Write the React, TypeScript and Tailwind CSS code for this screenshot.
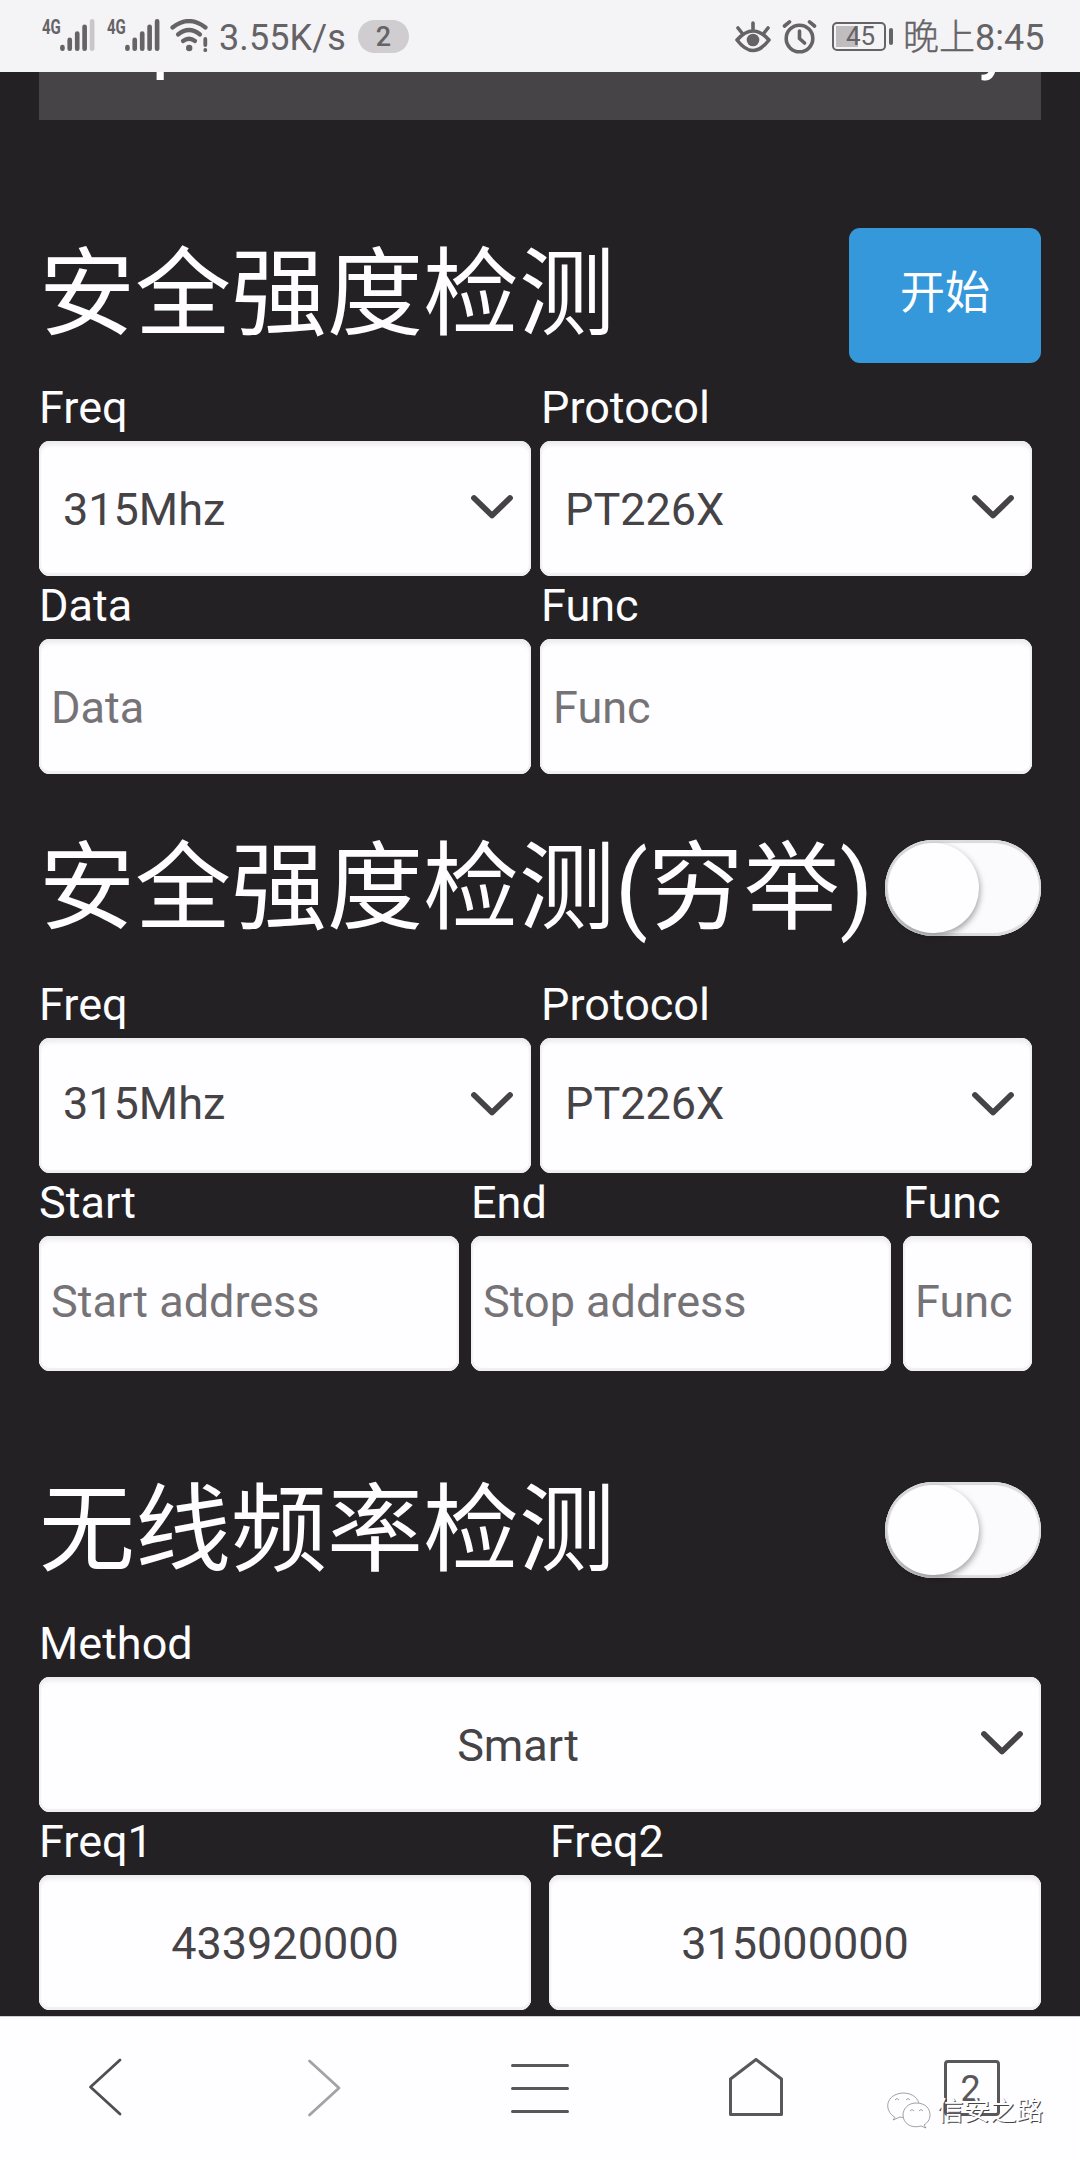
import type { ReactNode } from "react";

function Chevron() {
  return (
    <svg className="-mt-[3px]" width="44" height="28" viewBox="0 0 44 28" fill="none" stroke="#454346" strokeWidth="5.800" strokeLinecap="round" strokeLinejoin="round">
      <path d="M4 5L22 22.500L40 5" />
    </svg>
  );
}

function Field({ label, width, inset, children }: { label: string; width: string; inset?: boolean; children: ReactNode }) {
  return (
    <div className={width}>
      <div className={inset ? "h-[63px] pl-px leading-[60px] whitespace-nowrap text-[#fefdff]" : "h-[63px] leading-[60px] whitespace-nowrap text-[#fefdff]"}>{label}</div>
      <div className="flex h-[135px] items-center rounded-[11px] bg-[#fefdff] shadow-[inset_0_5px_4px_-1px_#ecebee,inset_0_-3px_1px_#f0eff2,inset_2px_0_1px_#f3f2f5,inset_-2px_0_1px_#f3f2f5]">
        {children}
      </div>
    </div>
  );
}

function SelectField({ label, value, raised, inset }: { label: string; value: string; raised?: boolean; inset?: boolean }) {
  return (
    <Field label={label} width="w-[492px]" inset={inset}>
      <span className={inset ? "w-[25px]" : "w-[24px]"} />
      <span className={raised ? "flex-1 pb-[3px] text-[#454346]" : "flex-1 pt-[3px] text-[#454346]"}>{value}</span>
      <span className="mr-[17px]"><Chevron /></span>
    </Field>
  );
}

function InputField({ label, hint, width, raised, inset }: { label: string; hint: string; width: string; raised?: boolean; inset?: boolean }) {
  return (
    <Field label={label} width={width} inset={inset}>
      <span className={inset ? "w-[13px]" : "w-[12px]"} />
      <span className={raised ? "pb-[3px] whitespace-nowrap text-[#757376]" : "pt-[2px] whitespace-nowrap text-[#757376]"}>{hint}</span>
    </Field>
  );
}

function Title({ children }: { children: ReactNode }) {
  return <h1 className="text-[96px] leading-[96px] whitespace-nowrap text-[#fefdff]">{children}</h1>;
}

function Toggle() {
  return (
    <div className="h-[96px] w-[156px] shrink-0 rounded-full bg-[#fbfafc] p-[3px] shadow-[inset_0_0_0_2px_#dcdbde,inset_0_3px_1px_#d6d5d8,inset_0_-3px_1px_#dddcdf]">
      <div className="h-[90px] w-[91px] rounded-full bg-[#fefdff] shadow-[1px_3px_6px_rgba(0,0,0,0.35)]" />
    </div>
  );
}

function Signal({ weak }: { weak?: boolean }) {
  return (
    <div className="flex h-[33px] w-[54px]">
      <span className="h-4 w-[18px] origin-left scale-x-75 text-[20px] leading-[17px] font-bold">4G</span>
      <svg width="37" height="33" viewBox="0 0 37 33" fill="none" stroke="#656366" strokeWidth="4.800" strokeLinecap="round">
        <path d="M2.500 28.500V30M10 21V30M17.700 14.500V30M25.300 7.500V30" />
        <path d="M33 2V30" stroke={weak ? "#c9c7ca" : "#656366"} />
      </svg>
    </div>
  );
}

function StatusBar() {
  return (
    <header className="flex h-[72px] items-start bg-[#f4f3f6] pt-[19px] pl-[42px] text-[#656366]">
      <Signal weak />
      <div className="w-[11px]" />
      <Signal />
      <svg className="ml-[8px]" width="40" height="34" viewBox="0 0 40 34" fill="none" stroke="#656366" strokeWidth="4.200" strokeLinecap="round">
        <path d="M3.500 8.500Q20 -4.500 36.500 8.500" />
        <path d="M9 15.500Q20 6.500 31 15.500" />
        <path d="M14 22Q20 17.500 26 22" />
        <circle cx="20.200" cy="29" r="3.200" fill="#656366" stroke="none" />
        <path d="M36.300 20V26M36.300 31V31.200" strokeWidth="3.800" />
      </svg>
      <span className="ml-[10px] w-[139px] text-[36px] leading-[38px] tracking-[0.1px]">3.55K/s</span>
      <span className="mt-px h-[33px] w-[51px] rounded-full bg-[#cfcdd0] text-center text-[27px] leading-[34px] font-medium">2</span>
      <svg className="ml-[325px]" width="38" height="35" viewBox="0 0 38 35" fill="none" stroke="#656366" strokeWidth="3.600" strokeLinecap="round">
        <path d="M3 21Q19 3 35 21Q19 42 3 21Z" strokeLinejoin="round" />
        <circle cx="19" cy="21" r="6.300" fill="#656366" stroke="none" />
        <path d="M19 4V10M4 9L8 14M34 9L30 14" />
      </svg>
      <svg className="ml-[10px]" width="36" height="36" viewBox="0 0 36 36" fill="none" stroke="#656366" strokeWidth="3.600" strokeLinecap="round">
        <circle cx="17.500" cy="19.500" r="13.300" />
        <path d="M17.500 12V19.500L22.500 24M2.500 7L7.500 2.800M32.500 7L27.500 2.800" />
      </svg>
      <div className="relative mt-[3px] ml-[14px] h-[29px] w-[54px] rounded-[5px] border-2 border-[#656366]">
        <div className="absolute top-[2px] left-[2px] h-[21px] w-[22px] bg-[#bfbdc0]" />
        <div className="relative pl-[3px] text-center text-[26px] leading-[25px]">45</div>
      </div>
      <div className="mt-[9px] ml-[3px] h-[17px] w-[4px] rounded-sm bg-[#656366]" />
      <span className="ml-[10px] text-[36px] leading-[38px] whitespace-nowrap"><span className="font-light [-webkit-text-stroke:0.4px_#656366]">晚上</span>8:45</span>
    </header>
  );
}

function BottomBar() {
  return (
    <nav className="relative grid h-[144px] grid-cols-5 items-center justify-items-center border-t border-[#cfcdd0] bg-[#fefdff] pb-px text-[#59575a]">
      <svg width="60" height="60" viewBox="0 0 60 60" fill="none" stroke="#504e51" strokeWidth="2.800" strokeLinecap="round" strokeLinejoin="round">
        <path d="M42 2L12.500 29L42 56" />
      </svg>
      <svg width="60" height="60" viewBox="0 0 60 60" fill="none" stroke="#a4a2a5" strokeWidth="2.800" strokeLinecap="round" strokeLinejoin="round">
        <path d="M15.500 3L45 30L15.500 57" />
      </svg>
      <svg width="60" height="60" viewBox="0 0 60 60" fill="none" stroke="#59575a" strokeWidth="3" strokeLinecap="round">
        <path d="M2.500 7.500H57.500M2.500 30.500H57.500M2.500 53.500H57.500" />
      </svg>
      <svg width="60" height="60" viewBox="0 0 60 60" fill="none" stroke="#59575a" strokeWidth="3" strokeLinejoin="round">
        <path d="M4.500 21L30 1.500L55.500 21V56.500H4.500Z" />
      </svg>
      <div className="flex size-[56px] items-center justify-center rounded-[4px] border-3 border-[#59575a] pt-[2px] pr-[3px] text-[36px]">2</div>
      <div className="absolute top-[75px] left-[886px] flex">
        <svg width="46" height="38" viewBox="0 0 46 38" fill="#fefdff" stroke="#8a888b" strokeWidth="0.800">
          <path d="M9 25.500C-3 18 0 2 17 1C27 1 33 7 33 13C33 24 21 27 14 25L7 28Z" />
          <path d="M30 11C40 11 44 17 44 23C44 28 41 31 38 33L40 36L35 34C25 37 17 31 17 23C17 17 22 11 30 11Z" />
          <path d="M9 8q2-3 4 0M20 8q2-3 4 0M24 19q2-3 4 0M33 19q2-3 4 0" fill="none" />
        </svg>
        <span className="ml-[5px] pt-[4px] text-[26.500px] leading-[30px] whitespace-nowrap text-[#fefdff] [text-shadow:1px_1px_0_#454346]">信安之路</span>
      </div>
    </nav>
  );
}

export default function App() {
  return (
    <div className="flex h-[2160px] w-[1080px] flex-col overflow-hidden bg-[#232124] font-['Roboto','Noto_Sans_CJK_SC',sans-serif] text-[45px]">
      <StatusBar />
      <main className="flex-1 px-[39px]">
        <div className="flex h-[48px] justify-between overflow-hidden bg-[#464446] pr-[33px] pl-[114px] text-[60px] font-medium text-[#fefdff]">
          <span className="-mt-[54px] leading-[60px]">p</span>
          <span className="-mt-[54px] leading-[60px]">y</span>
        </div>

        <section className="mt-[108px]">
          <div className="flex h-[135px] justify-between">
            <div className="pt-[18px]"><Title>安全强度检测</Title></div>
            <button className="h-[135px] w-[192px] rounded-[11px] bg-[#3498db] pb-[4px] text-[#fefdff]">开始</button>
          </div>
          <div className="mt-[15px] flex gap-[9px]">
            <SelectField label="Freq" value="315Mhz" />
            <SelectField label="Protocol" value="PT226X" inset />
          </div>
          <div className="flex gap-[9px]">
            <InputField label="Data" hint="Data" width="w-[492px]" />
            <InputField label="Func" hint="Func" width="w-[492px]" inset />
          </div>
        </section>

        <section className="mt-[66px]">
          <div className="flex h-[96px] justify-between">
            <Title>安全强度检测(穷举)</Title>
            <Toggle />
          </div>
          <div className="mt-[39px] flex gap-[9px]">
            <SelectField label="Freq" value="315Mhz" raised />
            <SelectField label="Protocol" value="PT226X" raised inset />
          </div>
          <div className="flex gap-[12px]">
            <InputField label="Start" hint="Start address" width="w-[420px]" raised />
            <InputField label="End" hint="Stop address" width="w-[420px]" raised />
            <InputField label="Func" hint="Func" width="w-[129px]" raised />
          </div>
        </section>

        <section className="mt-[111px]">
          <div className="flex h-[96px] justify-between">
            <Title>无线频率检测</Title>
            <Toggle />
          </div>
          <div className="mt-[36px]">
            <Field label="Method" width="w-full">
              <span className="flex-1 pt-[2px] pl-[17px] text-center text-[#454346]">Smart</span>
              <span className="mr-[17px]"><Chevron /></span>
            </Field>
          </div>
          <div className="flex justify-between">
            <Field label="Freq1" width="w-[492px]">
              <span className="flex-1 pt-[2px] text-center text-[#454346]">433920000</span>
            </Field>
            <Field label="Freq2" width="w-[492px]" inset>
              <span className="flex-1 pt-[2px] text-center text-[#454346]">315000000</span>
            </Field>
          </div>
        </section>
      </main>
      <BottomBar />
    </div>
  );
}
